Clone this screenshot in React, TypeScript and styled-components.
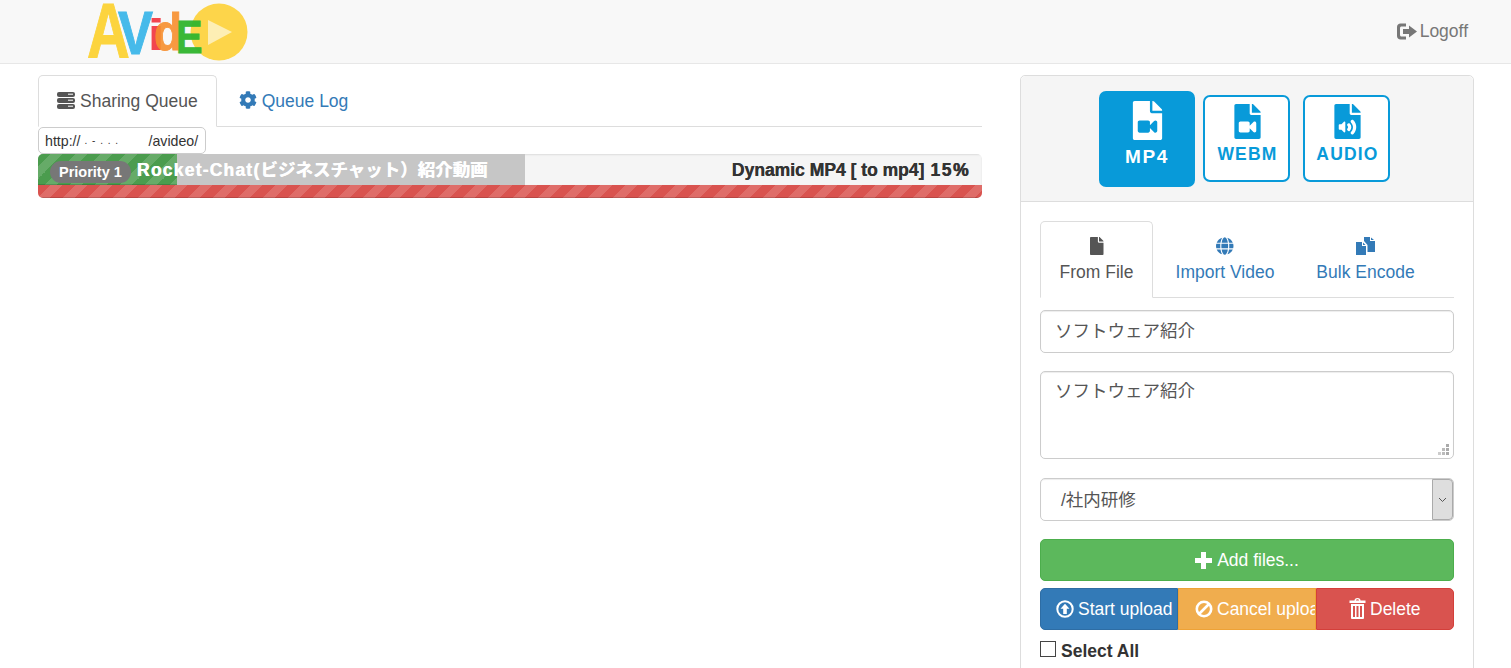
import React from 'react';
import styled, { createGlobalStyle, css } from 'styled-components';
import { FaCog, FaFile, FaFileAudio, FaFileVideo, FaGlobe } from 'react-icons/fa';

const GlobalStyle = createGlobalStyle`
  html, body {
    margin: 0;
    height: 100%;
    overflow: hidden;
    background: #fff;
    color: #333;
    font-family: "Liberation Sans", "Noto Sans CJK JP", Arial, sans-serif;
    font-size: 17.5px;
    line-height: 1.43;
  }
  * {
    box-sizing: border-box;
  }
`;

const stripes = css`
  background-image: linear-gradient(
    -45deg,
    rgba(255, 255, 255, 0.15) 25%,
    transparent 25%,
    transparent 50%,
    rgba(255, 255, 255, 0.15) 50%,
    rgba(255, 255, 255, 0.15) 75%,
    transparent 75%,
    transparent
  );
  background-size: 25px 25px;
`;

const Navbar = styled.nav`
  height: 64px;
  background: #f8f8f8;
  border-bottom: 1px solid #e7e7e7;
  display: flex;
  align-items: center;
  justify-content: space-between;
  padding: 0 43px 0 88px;
`;

const LogoffLink = styled.a`
  display: flex;
  align-items: center;
  gap: 3px;
  color: #777;
  font-size: 17.5px;
`;

const Page = styled.div`
  display: flex;
  justify-content: space-between;
  padding: 11px 37px 0 38px;
`;

const QueueColumn = styled.section`
  width: 944px;
`;

const SidePanel = styled.aside`
  width: 454px;
  height: 640px;
  border: 1px solid #ddd;
  border-radius: 5px;
`;

const TabRow = styled.div`
  display: flex;
  border-bottom: 1px solid #ddd;
`;

const Tab = styled.a<{ $active?: boolean }>`
  display: flex;
  align-items: center;
  gap: 5px;
  height: 52px;
  margin-bottom: -1px;
  padding: 2px 18px 0;
  border: 1px solid ${(p) => (p.$active ? '#ddd' : 'transparent')};
  border-bottom-color: ${(p) => (p.$active ? '#fff' : 'transparent')};
  border-radius: 5px 5px 0 0;
  background: ${(p) => (p.$active ? '#fff' : 'transparent')};
  color: ${(p) => (p.$active ? '#555' : '#337ab7')};
  margin-right: ${(p) => (p.$active ? '3px' : '0')};

  svg {
    margin-top: -4px;
  }
`;

const StackedTab = styled.a<{ $active?: boolean; $width: number }>`
  display: flex;
  flex-direction: column;
  align-items: center;
  width: ${(p) => p.$width}px;
  height: 77px;
  margin-bottom: -1px;
  padding-top: 15px;
  border: 1px solid ${(p) => (p.$active ? '#ddd' : 'transparent')};
  border-bottom-color: ${(p) => (p.$active ? '#fff' : 'transparent')};
  border-radius: 5px 5px 0 0;
  background: ${(p) => (p.$active ? '#fff' : 'transparent')};
  color: ${(p) => (p.$active ? '#555' : '#337ab7')};
  line-height: 25px;

  svg {
    height: 18px;
    margin-bottom: 5px;
  }
`;

const HostBox = styled.div`
  display: flex;
  align-items: center;
  width: 168px;
  height: 27px;
  padding: 2px 6px 0;
  border: 1px solid #ccc;
  border-radius: 5px;
  font-size: 14.2px;
  color: #333;
  background: #fff;
`;

const HostMask = styled.span`
  width: 68px;
  padding-left: 4px;
  flex: none;
  letter-spacing: 1px;
  font-size: 10px;
`;

const ProgressStack = styled.div`
  border-radius: 5px;
  overflow: hidden;
`;

const EncodeBar = styled.div`
  position: relative;
  height: 31px;
  background: #f5f5f5;
  box-shadow: inset 0 1px 2px rgba(0, 0, 0, 0.1);
`;

const ProgressFill = styled.div`
  position: absolute;
  top: 0;
  left: 0;
  height: 100%;
  background-color: #c6c6c6;
`;

const GreenFill = styled(ProgressFill)`
  ${stripes}
  background-color: #4b9c4e;
  box-shadow: inset 0 -1px 0 rgba(0, 0, 0, 0.15);
`;

const BarOverlay = styled.div`
  position: absolute;
  inset: 0;
  display: flex;
  align-items: center;
  padding: 0 12px;
`;

const PriorityBadge = styled.span`
  display: inline-block;
  margin-top: 4px;
  padding: 0 9px;
  height: 22px;
  border-radius: 12px;
  background: #777;
  color: #fff;
  font-size: 14.5px;
  font-weight: bold;
  line-height: 22px;
  white-space: nowrap;
`;

const BarTitle = styled.strong`
  margin-left: 6px;
  margin-top: 3px;
  color: #fff;
  font-size: 17.5px;
  text-shadow: 0.5px 0 0 #fff;
  white-space: nowrap;
`;

const BarTitleLatin = styled.span`
  letter-spacing: 1.2px;
`;

const BarStatus = styled.span`
  margin-left: auto;
  margin-top: 2px;
  color: #333;
  font-size: 17.5px;
  font-weight: bold;
  text-shadow: 0.3px 0 0 #333;
  white-space: nowrap;
`;

const BarPercent = styled.span`
  margin-left: 1px;
  letter-spacing: 1.6px;
  text-shadow: 0.6px 0 0 #333;
`;

const DownloadBar = styled.div`
  ${stripes}
  height: 13px;
  background-color: #d9534f;
  box-shadow: inset 0 -1px 0 rgba(0, 0, 0, 0.15);
`;

const PanelHeading = styled.div`
  display: flex;
  align-items: center;
  height: 126px;
  padding-left: 78px;
  background: #f5f5f5;
  border-bottom: 1px solid #ddd;
  border-radius: 5px 5px 0 0;
`;

const FormatButton = styled.button<{ $active?: boolean }>`
  display: flex;
  flex-direction: column;
  align-items: center;
  justify-content: center;
  flex: none;
  width: ${(p) => (p.$active ? 96 : 87)}px;
  height: ${(p) => (p.$active ? 96 : 87)}px;
  margin-right: ${(p) => (p.$active ? 8 : 13)}px;
  padding: ${(p) => (p.$active ? '0 0 10px' : '0 0 9px 2px')};
  border: 2px solid #089ad9;
  border-radius: 7px;
  background: ${(p) => (p.$active ? '#089ad9' : '#fff')};
  color: ${(p) => (p.$active ? '#fff' : '#089ad9')};
  font-family: inherit;
  font-size: ${(p) => (p.$active ? 19 : 17.5)}px;
  font-weight: bold;
  letter-spacing: ${(p) => (p.$active ? 1.6 : 1.2)}px;
  line-height: 20px;

  svg {
    height: ${(p) => (p.$active ? 39 : 35)}px;
    width: auto;
    margin-bottom: ${(p) => (p.$active ? 7 : 5)}px;
  }
`;

const PanelBody = styled.div`
  padding: 19px 19px;
`;

const FieldInput = styled.div`
  height: 43px;
  margin-top: 12px;
  padding: 0 14px;
  border: 1px solid #ccc;
  border-radius: 5px;
  box-shadow: inset 0 1px 1px rgba(0, 0, 0, 0.075);
  color: #555;
  line-height: 41px;
`;

const FieldArea = styled(FieldInput)`
  position: relative;
  height: 88px;
  margin-top: 18px;
  line-height: 38px;
`;

const ResizeGrip = styled.svg`
  position: absolute;
  right: 3px;
  bottom: 2px;
`;

const FieldSelect = styled(FieldInput)`
  display: flex;
  justify-content: space-between;
  margin-top: 19px;
  padding: 0 0 0 20px;
  line-height: 43px;
`;

const SelectArrow = styled.span`
  display: flex;
  align-items: center;
  justify-content: center;
  width: 21px;
  margin: 0;
  background: #dedede;
  border: 1px solid #aaa;
  border-radius: 0 4px 4px 0;
`;

const AddButton = styled.button`
  display: flex;
  align-items: center;
  justify-content: center;
  gap: 5px;
  width: 100%;
  height: 42px;
  margin-top: 18px;
  padding: 2px 0 0;
  border: 1px solid #4cae4c;
  border-radius: 5px;
  background: #5cb85c;
  color: #fff;
  font: inherit;

  svg {
    margin-top: -2px;
  }
`;

const ButtonGroup = styled.div`
  display: grid;
  grid-template-columns: 138px 138px 138px;
  margin-top: 7px;
`;

const ActionButton = styled.button<{ $bg: string; $edge: string; $shape?: 'first' | 'last'; $inset: number }>`
  display: flex;
  align-items: center;
  gap: 4px;
  height: 42px;
  padding: 2px 0 0 ${(p) => p.$inset}px;
  overflow: hidden;
  white-space: nowrap;
  border: 1px solid ${(p) => p.$edge};
  border-radius: ${(p) =>
    p.$shape === 'first' ? '5px 0 0 5px' : p.$shape === 'last' ? '0 5px 5px 0' : '0'};
  background: ${(p) => p.$bg};
  color: #fff;
  font: inherit;

  svg {
    flex: none;
    margin-top: -3px;
  }
`;

const SelectAllRow = styled.label`
  display: flex;
  align-items: center;
  gap: 5px;
  margin-top: 9px;
  color: #333;
  font-weight: bold;
`;

const CheckBox = styled.span`
  width: 16px;
  height: 16px;
  margin-top: -5px;
  border: 1px solid #444;
  background: #fff;
`;

const FolderPages = () => (
  <svg width="19" height="18" viewBox="0 0 19 18" fill="currentColor">
    <path d="M0 5h6v4h4v9H0z" />
    <path d="M7 5.500v2.500h2.500z" />
    <path d="M8 0h6v4h5v11h-7.500V8L8 4z" />
    <path d="M15 0.500v2.500h3z" />
  </svg>
);

const ServerIcon = () => (
  <svg width="18" height="17" viewBox="0 0 18 17" fill="currentColor">
    <rect y="0" width="18" height="5" rx="2" />
    <rect y="6" width="18" height="5" rx="2" />
    <rect y="12" width="18" height="5" rx="2" />
    <rect x="11" y="1.700" width="5" height="1" fill="#fff" />
    <rect x="11" y="7.700" width="5" height="1" fill="#fff" />
    <rect x="11" y="13.700" width="5" height="1" fill="#fff" />
  </svg>
);

const LogoutIcon = () => (
  <svg width="20" height="17" viewBox="0 0 20 17" fill="currentColor">
    <path d="M0 4C0 2 1.500.5 3.500.5H9v3H4.500C3.700 3.500 3 4.200 3 5v7c0 .8.7 1.500 1.500 1.500H9v3H3.500C1.500 16.500 0 15 0 13z" />
    <path d="M12 2.500 20 8.500 12 14.500V11H6V6h6z" />
  </svg>
);

const PlusIcon = () => (
  <svg width="17" height="17" viewBox="0 0 17 17" fill="currentColor">
    <path d="M6 0h5v6h6v5h-6v6H6v-6H0V6h6z" />
  </svg>
);

const UploadIcon = () => (
  <svg width="18" height="18" viewBox="0 0 18 18">
    <circle cx="9" cy="9" r="7.700" fill="none" stroke="currentColor" strokeWidth="2" />
    <path d="M9 3.800 13.500 8.800H10.800V14H7.200V8.800H4.500z" fill="currentColor" />
  </svg>
);

const BanIcon = () => (
  <svg width="18" height="18" viewBox="0 0 18 18" fill="none" stroke="currentColor" strokeWidth="2.600">
    <circle cx="9" cy="9" r="7.200" />
    <path d="M4 14 14 4" />
  </svg>
);

const TrashIcon = () => (
  <svg width="17" height="21" viewBox="0 0 17 21" fill="currentColor">
    <path d="M5.500 2.500C5.500 1 6.500 0 8.500 0s3 1 3 2.500H16.500V5H.5V2.500zM7 2.500h3C10 2 9.500 1.300 8.500 1.300S7 2 7 2.500z" fillRule="evenodd" />
    <path d="M2 6h13v14a1 1 0 0 1-1 1H3a1 1 0 0 1-1-1zM4 8v11h2V8zM7.500 8v11h2V8zM11 8v11h2V8z" fillRule="evenodd" />
  </svg>
);

const LogoMark = () => (
  <svg width="160" height="62" viewBox="0 0 160 62">
    <circle cx="131" cy="31" r="28.500" fill="#fdd54a" />
    <path d="M120 19 144 31 120 44z" fill="#fdeeb4" />
    <g fontFamily="Liberation Sans, sans-serif" fontWeight="bold" strokeWidth="1">
      <text transform="translate(-1 57) scale(0.77 1)" fontSize="77" fill="#fdd335" stroke="#fdd335" opacity="0.95">A</text>
      <text transform="translate(30 53) scale(0.86 1)" fontSize="61" fill="#3db7ea" stroke="#3db7ea" opacity="0.95">V</text>
      <text transform="translate(59 49) scale(1.5 1)" fontSize="44" fill="#f23c46" opacity="0.95">i</text>
      <text transform="translate(66 49) scale(0.88 1)" fontSize="52" fill="#f78f2e" stroke="#f78f2e" opacity="0.9">d</text>
      <text transform="translate(88 52) scale(0.85 1)" fontSize="46.500" fill="#30b52e" stroke="#30b52e" opacity="0.95">E</text>
    </g>
  </svg>
);

const App: React.FC = () => (
  <>
    <GlobalStyle />
    <Navbar>
      <LogoMark />
      <LogoffLink>
        <LogoutIcon />
        Logoff
      </LogoffLink>
    </Navbar>
    <Page>
      <QueueColumn>
        <TabRow>
          <Tab $active>
            <ServerIcon />
            Sharing Queue
          </Tab>
          <Tab>
            <FaCog size={18} />
            Queue Log
          </Tab>
        </TabRow>
        <HostBox>
          http://
          <HostMask>. - . . .</HostMask>
          /avideo/
        </HostBox>
        <ProgressStack>
          <EncodeBar>
            <ProgressFill style={{ width: '51.6%' }} />
            <GreenFill style={{ width: '14.7%' }} />
            <BarOverlay>
              <PriorityBadge>Priority 1</PriorityBadge>
              <BarTitle>
                <BarTitleLatin>Rocket-Chat(</BarTitleLatin>ビジネスチャット）紹介動画
              </BarTitle>
              <BarStatus>
                Dynamic MP4 [ to mp4] <BarPercent>15%</BarPercent>
              </BarStatus>
            </BarOverlay>
          </EncodeBar>
          <DownloadBar />
        </ProgressStack>
      </QueueColumn>
      <SidePanel>
        <PanelHeading>
          <FormatButton $active>
            <FaFileVideo />
            MP4
          </FormatButton>
          <FormatButton>
            <FaFileVideo />
            WEBM
          </FormatButton>
          <FormatButton>
            <FaFileAudio />
            AUDIO
          </FormatButton>
        </PanelHeading>
        <PanelBody>
          <TabRow>
            <StackedTab $active $width={113}>
              <FaFile />
              From File
            </StackedTab>
            <StackedTab $width={144}>
              <FaGlobe />
              Import Video
            </StackedTab>
            <StackedTab $width={137}>
              <FolderPages />
              Bulk Encode
            </StackedTab>
          </TabRow>
          <FieldInput>ソフトウェア紹介</FieldInput>
          <FieldArea>
            ソフトウェア紹介
            <ResizeGrip width="12" height="12" viewBox="0 0 12 12">
              <rect x="8" y="0" width="3" height="3" fill="#aaa" />
              <rect x="4" y="4" width="3" height="3" fill="#bbb" />
              <rect x="8" y="4" width="3" height="3" fill="#aaa" />
              <rect x="0" y="8" width="3" height="3" fill="#ccc" />
              <rect x="4" y="8" width="3" height="3" fill="#bbb" />
              <rect x="8" y="8" width="3" height="3" fill="#aaa" />
            </ResizeGrip>
          </FieldArea>
          <FieldSelect>
            /社内研修
            <SelectArrow>
              <svg width="9" height="6" viewBox="0 0 9 6" fill="none" stroke="#555">
                <path d="M1 1l3.500 3.500L8 1" />
              </svg>
            </SelectArrow>
          </FieldSelect>
          <AddButton>
            <PlusIcon />
            Add files...
          </AddButton>
          <ButtonGroup>
            <ActionButton $bg="#337ab7" $edge="#2e6da4" $shape="first" $inset={15}>
              <UploadIcon />
              Start upload
            </ActionButton>
            <ActionButton $bg="#f0ad4e" $edge="#eea236" $inset={16}>
              <BanIcon />
              Cancel upload
            </ActionButton>
            <ActionButton $bg="#d9534f" $edge="#d43f3a" $shape="last" $inset={32}>
              <TrashIcon />
              Delete
            </ActionButton>
          </ButtonGroup>
          <SelectAllRow>
            <CheckBox />
            Select All
          </SelectAllRow>
        </PanelBody>
      </SidePanel>
    </Page>
  </>
);

export default App;
